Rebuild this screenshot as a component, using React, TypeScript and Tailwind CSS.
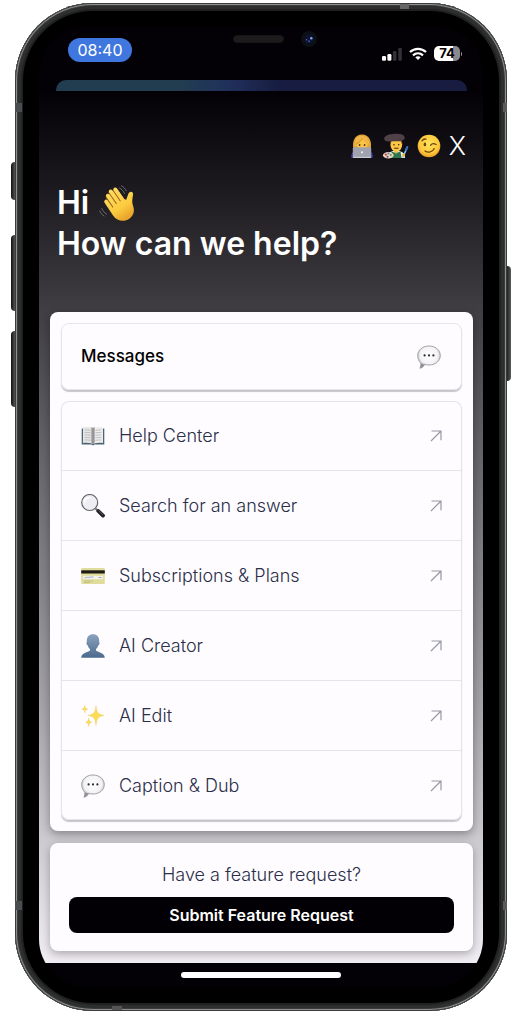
import type { ReactNode } from "react";

function WaveIcon() {
  return (
    <svg viewBox="0 0 36 36" className="size-9" role="img" aria-label="Waving hand">
      <defs>
        <linearGradient id="wave" x1="0" y1="0" x2="0.6" y2="1">
          <stop offset="0" stopColor="#ffe06a" />
          <stop offset="0.7" stopColor="#fccb3f" />
          <stop offset="1" stopColor="#e9a52c" />
        </linearGradient>
      </defs>
      <g transform="translate(3 1) scale(0.96)">
        <path
          fill="#9c6417"
          d="M4.861 9.147c.94-.657 2.357-.531 3.201.166l-.968-1.407c-.779-1.111-.5-2.313.612-3.093 1.112-.777 4.263 1.312 4.263 1.312-.786-1.122-.639-2.544.483-3.331 1.122-.784 2.67-.513 3.456.611l10.42 14.72L25 31l-11.083-4.042L4.25 12.625c-.793-1.129-.519-2.686.611-3.478z"
        />
        <path
          fill="url(#wave)"
          d="M2.695 17.336s-1.132-1.65.519-2.781c1.649-1.131 2.78.518 2.78.518l5.251 7.658c.181-.302.379-.6.6-.894L4.557 11.21s-1.131-1.649.519-2.78c1.649-1.131 2.78.518 2.78.518l6.855 9.997c.255-.208.516-.417.785-.622L7.549 6.732s-1.131-1.649.519-2.78c1.649-1.131 2.78.518 2.78.518l7.947 11.589c.292-.179.581-.334.871-.498L12.238 4.729s-1.131-1.649.518-2.78c1.649-1.131 2.78.518 2.78.518l7.854 11.454 1.8 0.500L27.500 8.200s.5-2 2.500-2.200c2-.1 2.600 1.500 2.300 3.200l-.8 5.600c-.1 2 .1 4 .9 6.100 2 5.200.300 10.200-4 13.200-5.465 3.747-12.936 2.354-16.684-3.11L2.695 17.336z"
        />
      </g>
      <g fill="none" stroke="#6d6b70" strokeWidth="1" strokeLinecap="round">
        <path d="M20.500 3c2.300 1.300 4 3 5 5.400M22.500 0.800c2.200 1.200 3.900 3 4.700 5M2.800 23.500c1 2.600 2.700 4.500 4.700 5.700M0.800 26c.8 2.200 2.300 4 4.200 5" />
      </g>
    </svg>
  );
}

function TechnologistIcon() {
  return (
    <svg viewBox="0 0 24 26" className="h-[26px] w-6" role="img" aria-label="Technologist">
      <path d="M3.500 17C1.500 8 5 1.500 12 1.500S22.500 8 20.500 17z" fill="#e0a536" />
      <path d="M1 24.500c.2-5 2.500-7 5-7.500h12c2.500.5 4.800 2.500 5 7.500z" fill="#3b35a5" />
      <ellipse cx="12" cy="10.500" rx="5.800" ry="6.500" fill="#fbc546" />
      <path d="M5 13C4 5 7 2.700 12.500 3c4.500.3 7 3.500 6.600 9-3.200-1.500-5.500-3.500-6.400-6.200C11 8.800 8.500 11 5 13z" fill="#f0b548" />
      <path d="M12.700 5.200C11 8 9 9.700 6 11" stroke="#bd8220" strokeWidth="0.700" fill="none" />
      <circle cx="9.600" cy="12" r="0.900" fill="#523013" />
      <circle cx="14.600" cy="12" r="0.900" fill="#523013" />
      <rect x="2.800" y="14.300" width="18.400" height="10.700" rx="1.200" fill="#a0a3ae" />
      <rect x="2.800" y="23.800" width="18.400" height="1.200" fill="#c8cbd2" />
      <circle cx="12" cy="19.300" r="1.100" fill="#eef0f4" />
    </svg>
  );
}

function ArtistIcon() {
  return (
    <svg viewBox="0 0 27 26" className="h-[26px] w-[27px]" role="img" aria-label="Artist">
      <path d="M5 25c0-4.500 3-6.500 6.500-7h5c4 .5 6.500 2.500 6.500 7z" fill="#f0f1ee" />
      <path d="M9.500 18.500 14 20l4.500-1.500 1 6.500H9z" fill="#2f7650" />
      <path d="m12 18 2 3 2-3z" fill="#e8b33a" />
      <ellipse cx="14.300" cy="11.500" rx="5.900" ry="7.300" fill="#fcc744" />
      <path d="M8.200 12c-.4-4 .3-6 1.800-6.500h8.500c1.600 1 2.200 3 1.700 6.500l-1.200-3.800h-9.600z" fill="#573726" />
      <path d="M2.200 6C2 2.700 7 1 13 .8c6-.2 10 1.200 9.700 4.200-.2 2.200-2.700 2.900-5.700 2.700-4-.2-7 .6-10 .8-2.700.2-4.700-.8-4.800-2.500z" fill="#504047" />
      <circle cx="12" cy="11.700" r="0.800" fill="#452713" />
      <circle cx="16.700" cy="11.700" r="0.800" fill="#452713" />
      <path d="M11.500 15.200c1-.8 1.800-.8 2.800-.3 1-.5 1.900-.5 2.900.3-1.800.9-3.900.9-5.700 0z" fill="#6d431b" />
      <ellipse cx="6.300" cy="22.300" rx="5.300" ry="3.200" fill="#ead4bd" />
      <circle cx="3.800" cy="21.600" r="1.100" fill="#c13a43" />
      <circle cx="6.500" cy="20.600" r="1" fill="#4f7ac4" />
      <circle cx="8.800" cy="22" r="1" fill="#5b9a4a" />
      <circle cx="5.500" cy="23.700" r="1" fill="#76408c" />
      <path d="m21 24 3.500-8" stroke="#8fc5e8" strokeWidth="1.600" strokeLinecap="round" />
      <path d="m24 17 1.300-3" stroke="#3773c4" strokeWidth="2" strokeLinecap="round" />
      <circle cx="21.500" cy="22" r="1.600" fill="#f3bd40" />
    </svg>
  );
}

function WinkIcon() {
  return (
    <svg viewBox="0 0 24 24" className="size-6" role="img" aria-label="Winking face">
      <defs>
        <radialGradient id="wink" cx="0.5" cy="0.4" r="0.6">
          <stop offset="0" stopColor="#ffe35c" />
          <stop offset="0.7" stopColor="#fdc93d" />
          <stop offset="1" stopColor="#ee9c27" />
        </radialGradient>
      </defs>
      <circle cx="12" cy="12" r="11.300" fill="url(#wink)" />
      <g fill="none" stroke="#6f420e" strokeWidth="1.300" strokeLinecap="round">
        <path d="M5 6.800c1-1.600 2.300-2.100 4-1.700M13.500 11.300c1.300-1.700 3.700-2 5.600-.8M8 17c3 2.200 7.800 1.200 9.200-2.400" />
      </g>
      <ellipse cx="7.900" cy="10.400" rx="1.300" ry="1.900" fill="#6f420e" />
    </svg>
  );
}

function SpeechIcon() {
  return (
    <svg viewBox="0 0 24 24" className="size-6" aria-hidden="true">
      <defs>
        <radialGradient id="speech" cx="0.5" cy="0.42" r="0.6">
          <stop offset="0" stopColor="#ffffff" />
          <stop offset="0.65" stopColor="#f3f3f5" />
          <stop offset="1" stopColor="#a4a4a8" />
        </radialGradient>
      </defs>
      <path
        d="M12 1c6.400 0 11.300 4 11.300 9.500S18.400 20 12 20c-1.500 0-3-.2-4.300-.6-1 1.900-2.600 3.500-4.800 3.800.8-1.200 1.100-3.200.9-5C1.900 16.300.7 13.600.7 10.500.7 5 5.600 1 12 1z"
        fill="url(#speech)"
        stroke="#9b9b9f"
        strokeWidth="0.900"
      />
      <path d="M2.900 23.200c.8-1.200 1.100-3.200.9-5l3.900 1.200c-1 1.900-2.600 3.500-4.800 3.800z" fill="#929296" />
      <g fill="#2b2b30">
        <circle cx="7.600" cy="10.400" r="1.100" />
        <circle cx="12" cy="10.400" r="1.100" />
        <circle cx="16.400" cy="10.400" r="1.100" />
      </g>
    </svg>
  );
}

function BookIcon() {
  return (
    <svg viewBox="0 0 24 24" className="size-6" aria-hidden="true">
      <path d="M.7 4.500h22.600v16h-9.800l-1.500 1-1.500-1H.7z" fill="#4d6579" />
      <path d="M2 3.200c3.500-.4 7.500-.4 10 .6v16c-3-1-6.500-1.200-10-.9z" fill="#e6e5e4" />
      <path d="M22 3.200c-3.500-.4-7.500-.4-10 .6v16c3-1 6.500-1.200 10-.9z" fill="#efeeed" />
      <path d="M10 3.300c1 .1 1.600.3 2 .5.400-.2 1-.4 2-.5v15.900l-2 .6-2-.6z" fill="#b4b3b5" />
      <path d="M12 3.800v16" stroke="#6c6a70" strokeWidth="0.800" />
      <path
        d="M3.700 6c2.200-.2 4.200-.1 5.900.4M3.700 8.500c2.200-.2 4.200-.1 5.900.4M3.700 11c2.200-.2 4.200-.1 5.900.4M3.700 13.500c2.200-.2 4.200-.1 5.900.4M3.700 16c2.200-.2 4.200-.1 5.900.4M20.300 6c-2.200-.2-4.200-.1-5.900.4M20.300 8.500c-2.200-.2-4.200-.1-5.900.4M20.300 11c-2.200-.2-4.200-.1-5.900.4M20.300 13.500c-2.200-.2-4.200-.1-5.900.4M20.300 16c-2.200-.2-4.200-.1-5.900.4"
        stroke="#b4b3b6"
        strokeWidth="0.800"
        fill="none"
      />
    </svg>
  );
}

function MagnifierIcon() {
  return (
    <svg viewBox="0 0 24 24" className="size-6" aria-hidden="true">
      <path d="m14.500 14.500 3.200 3.200" stroke="#77777c" strokeWidth="2" />
      <path d="m17.300 17 4.700 4.600" stroke="#222226" strokeWidth="3.800" strokeLinecap="round" />
      <path d="m17.800 16.600 4.200 4.200" stroke="#606066" strokeWidth="0.900" strokeLinecap="round" />
      <circle cx="8.700" cy="8.500" r="8" fill="#eeeef4" stroke="#66666c" strokeWidth="1.200" />
      <path d="M3.500 8.500c.2-3 2.200-4.900 5-5" stroke="#ffffff" strokeWidth="1.500" fill="none" strokeLinecap="round" />
    </svg>
  );
}

function CardIcon() {
  return (
    <svg viewBox="0 0 24 24" className="size-6" aria-hidden="true">
      <rect x="0.200" y="4" width="23.600" height="16" rx="1" fill="#dfdc9c" />
      <rect x="0.200" y="6.300" width="23.600" height="3.200" fill="#1d1b14" />
      <rect x="2" y="11.800" width="20" height="3.400" fill="#f4f4ee" />
      <path d="M3.500 13.800c1-1.200 1.300.5 2.200-.3s1.300.5 2.200-.2 1.300.4 2.200-.2 1.500.3 2.400 0M17.500 13.500h3" stroke="#7c82a5" strokeWidth="0.700" fill="none" />
      <path d="M3 17h9M3 18.400h6" stroke="#b9b67c" strokeWidth="0.700" />
    </svg>
  );
}

function PersonIcon() {
  return (
    <svg viewBox="0 0 24 24" className="size-6" aria-hidden="true">
      <defs>
        <linearGradient id="person" x1="0" y1="0" x2="0" y2="1">
          <stop offset="0" stopColor="#8aa2be" />
          <stop offset="1" stopColor="#4c6a8d" />
        </linearGradient>
      </defs>
      <path
        d="M12 .3c3.900 0 6.200 2.500 6.200 6.400 0 .5 0 .9-.1 1.300.8.300.7 2.900-.9 3.400-.5 1.700-1.300 2.800-2.200 3.500v1.700c1 1.500 8.400 1.900 8.800 7.100H.2c.4-5.200 7.800-5.600 8.800-7.100v-1.700c-.9-.7-1.700-1.800-2.200-3.500C5.200 10.900 5.100 8.300 5.900 8c-.1-.4-.1-.8-.1-1.300C5.800 2.800 8.100.3 12 .3z"
        fill="url(#person)"
      />
    </svg>
  );
}

function SparklesIcon() {
  return (
    <svg viewBox="0 0 24 24" className="size-6" aria-hidden="true">
      <g fill="#fbdc55" stroke="#eec05a" strokeWidth="0.300">
        <path d="M15 1.300c.7 6.800 1.800 9.200 8.200 10.100-6.400.9-7.500 3.500-8.200 10.200-.7-6.700-1.800-9.300-8.200-10.200 6.400-.9 7.500-3.300 8.200-10.100z" />
        <path d="M3.800 1.300c.3 2.500 1 3.400 3.200 3.800-2.200.4-2.900 1.300-3.200 3.900C3.500 6.400 2.800 5.500.6 5.100c2.200-.4 2.900-1.300 3.200-3.800z" />
        <path d="M7.700 13.800c.3 2.900 1 3.900 3.200 4.400-2.200.5-2.900 1.700-3.200 4.400-.3-2.700-1-3.900-3.200-4.400 2.200-.5 2.900-1.500 3.200-4.400z" />
      </g>
    </svg>
  );
}

function ArrowIcon() {
  return (
    <svg viewBox="0 0 12 12" className="size-3" fill="none" stroke="#9698a3" strokeWidth="1.200" aria-hidden="true">
      <path d="M1 11 11 1M1.500 1H11v9.200" />
    </svg>
  );
}

function StatusIcons() {
  return (
    <div className="flex items-center gap-[7px]">
      <svg viewBox="0 0 20 14" className="h-3.5 w-5" aria-label="Signal" role="img">
        <rect x="0" y="9" width="4" height="4.800" rx="1.300" fill="#fff" />
        <rect x="5.400" y="7" width="4" height="6.800" rx="1.300" fill="#fff" />
        <rect x="10.900" y="4" width="3.600" height="9.800" rx="1.300" fill="#343238" />
        <rect x="16.300" y="0.700" width="3.500" height="13.100" rx="1.300" fill="#343238" />
      </svg>
      <svg viewBox="0 0 18 13" className="h-[13px] w-[18px]" fill="none" stroke="#fff" strokeWidth="2.300" aria-label="Wi-Fi" role="img">
        <path d="M1 5c4.600-4.300 11.400-4.300 16 0M4 8.300c3-2.700 7-2.700 10 0" />
        <path d="M9 12.900 6.300 10.300c1.600-1.300 3.800-1.300 5.400 0z" fill="#fff" stroke="none" />
      </svg>
      <div className="flex items-center gap-px">
        <div className="flex h-[15px] w-[26px] items-center justify-center rounded-[5px] bg-linear-to-r from-white from-75% to-[#8b888e] to-75% text-[13px] leading-none font-bold text-black">
          74
        </div>
        <div className="h-1 w-px rounded-r bg-[#8b888e]" />
      </div>
    </div>
  );
}

const links: { label: string; icon: ReactNode }[] = [
  { label: "Help Center", icon: <BookIcon /> },
  { label: "Search for an answer", icon: <MagnifierIcon /> },
  { label: "Subscriptions & Plans", icon: <CardIcon /> },
  { label: "AI Creator", icon: <PersonIcon /> },
  { label: "AI Edit", icon: <SparklesIcon /> },
  { label: "Caption & Dub", icon: <SpeechIcon /> },
];

function FrameDetails() {
  return (
    <div aria-hidden="true">
      <div className="absolute top-[159px] -left-1 h-[38px] w-1 rounded-l-sm bg-linear-to-r from-[#111] to-[#555856]" />
      <div className="absolute top-[232px] -left-1 h-[76px] w-1 rounded-l-sm bg-linear-to-r from-[#111] to-[#555856]" />
      <div className="absolute top-[328px] -left-1 h-[76px] w-1 rounded-l-sm bg-linear-to-r from-[#111] to-[#555856]" />
      <div className="absolute top-[263px] -right-1 h-[115px] w-1 rounded-r-sm bg-linear-to-r from-[#222] to-[#5a5a56]" />
      <div className="absolute top-[100px] left-0 h-[9px] w-[7px] bg-[#4a4d4f]" />
      <div className="absolute top-[100px] right-0 h-[9px] w-1 bg-[#5a5a5a]" />
      <div className="absolute bottom-[101px] left-0 h-[9px] w-[7px] bg-[#4a4d4f]" />
      <div className="absolute right-0 bottom-[101px] h-[9px] w-1 bg-[#5a5a5a]" />
      <div className="absolute top-px right-[98px] h-[5px] w-[9px] bg-[#666]" />
      <div className="absolute bottom-px left-[97px] h-1 w-[10px] bg-[#555]" />
    </div>
  );
}

export default function App() {
  return (
    <main className="bg-white pt-[3px] pr-[14px] pb-1 pl-[15px] font-['Inter','Liberation_Sans',sans-serif]">
      <div className="relative mx-auto max-w-[560px] rounded-[78px] bg-black px-6 pt-[23px] pb-6 shadow-[inset_0_0_0_1px_#3a3c3b,inset_0_0_0_2px_#8e8f8e,inset_0_0_0_3px_#3a3c3b,inset_0_0_0_6px_#2d2f2e,inset_0_0_0_8px_#202120]">
        <FrameDetails />
        <div className="absolute top-7 left-1/2 flex -translate-x-7 items-center gap-[17px]" aria-hidden="true">
          <div className="h-2 w-[51px] rounded-full border border-[#161617] bg-[#1c1c1d]" />
          <svg viewBox="0 0 16 16" className="size-4">
            <circle cx="8" cy="8" r="8" fill="#0c0f14" />
            <circle cx="8" cy="8" r="4.500" fill="#0c1430" />
            <circle cx="10.300" cy="7.300" r="1.200" fill="#88a0ff" />
            <circle cx="5.500" cy="8.800" r="0.800" fill="#6b55a8" />
            <circle cx="8" cy="10.300" r="1" fill="#2c52a5" />
          </svg>
        </div>

        <div className="overflow-hidden rounded-[48px] bg-[#030106]">
          <div className="flex h-[54px] items-start justify-between pt-3 pr-[21px] pl-[29px]">
            <time className="flex h-6 w-16 items-center justify-center rounded-full bg-[#3f77de] text-base text-white">
              08:40
            </time>
            <div className="pt-2">
              <StatusIcons />
            </div>
          </div>
          <div className="mr-4 ml-[17px] h-[11px] rounded-t-[10px] bg-linear-to-r from-[#223d50] from-30% via-[#20305b] via-42% to-[#171c40] to-55%" />

          <div className="bg-[linear-gradient(to_bottom,#030106_0%,#100d13_6%,#1f1c21_12%,#403e43_25%,#626166_40%,#86858a_57%,#a9a7ac_72%,#cfcdd2_87%,#f1edf4_100%)] pr-[10px] pb-3 pl-[11px]">
            <header className="px-[7px]">
              <div className="flex items-center justify-end gap-2 pt-[42px]">
                <TechnologistIcon />
                <ArtistIcon />
                <WinkIcon />
                <button type="button" aria-label="Close" className="text-[26px] leading-[26px] font-light text-white">
                  X
                </button>
              </div>
              <h1 className="pt-[23px] pb-12 text-[32px] leading-[41px] font-semibold text-white">
                <span className="flex items-center gap-[10px]">
                  Hi <WaveIcon />
                </span>
                How can we help?
              </h1>
            </header>

            <section className="rounded-lg bg-[#fefcff] p-[11px] shadow-[0_3px_10px_rgba(0,0,0,0.35)]">
              <button
                type="button"
                className="flex h-[67px] w-full items-center justify-between rounded-lg border border-[#e5e4e9] pr-5 pl-[19px] text-[17px] font-medium text-black shadow-[0_2px_1px_rgba(0,0,0,0.22)]"
              >
                Messages
                <SpeechIcon />
              </button>
              <ul className="mt-[11px] divide-y divide-[#e5e4e9] rounded-lg shadow-[inset_0_0_0_1px_#e5e4e9,0_2px_1px_rgba(0,0,0,0.22)]">
                {links.map((link) => (
                  <li key={link.label}>
                    <a href="#" className="flex h-[69px] items-center gap-[14px] px-5 text-lg font-light text-[#2b2f48]">
                      {link.icon}
                      <span className="grow">{link.label}</span>
                      <ArrowIcon />
                    </a>
                  </li>
                ))}
              </ul>
            </section>

            <section className="mt-3 rounded-lg bg-[#fefcff] px-[19px] pt-5 pb-[18px] text-center shadow-[0_3px_8px_rgba(0,0,0,0.28)]">
              <p className="text-lg leading-6 font-light text-[#2b2f48]">Have a feature request?</p>
              <button type="button" className="mt-[10px] h-9 w-full rounded-lg bg-[#020004] text-base font-semibold text-white">
                Submit Feature Request
              </button>
            </section>
          </div>

          <div className="flex h-6 items-center justify-center">
            <div className="h-[6px] w-[36%] rounded-full bg-white" />
          </div>
        </div>
      </div>
    </main>
  );
}
